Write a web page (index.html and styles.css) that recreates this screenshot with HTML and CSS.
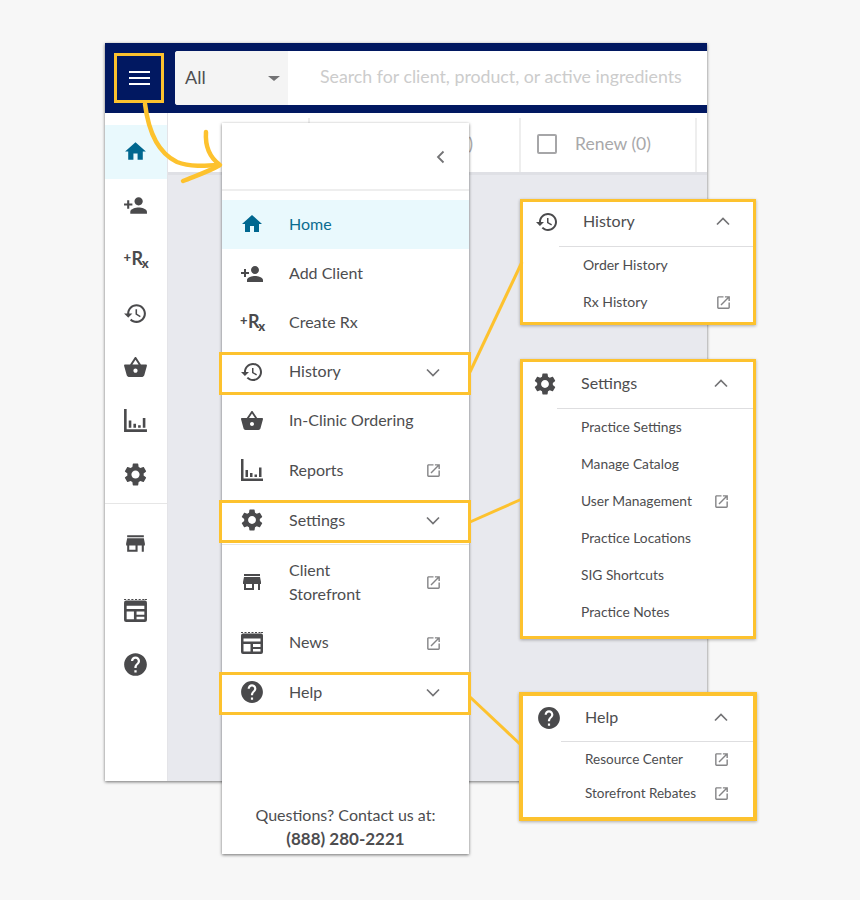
FILE: index.html
```html
<!DOCTYPE html>
<html lang="en">
<head>
<meta charset="utf-8">
<title>Navigation menu guide</title>
<link rel="stylesheet" href="styles.css">
</head>
<body>
<svg class="sprite" xmlns="http://www.w3.org/2000/svg">
  <symbol id="i-home" viewBox="0 0 24 24"><path d="M10 20v-6h4v6h5v-8h3L12 3 2 12h3v8z"/></symbol>
  <symbol id="i-add" viewBox="0 0 24 24"><path d="M15 12c2.21 0 4-1.79 4-4s-1.79-4-4-4-4 1.79-4 4 1.79 4 4 4zm-9-2V7H4v3H1v2h3v3h2v-3h3v-2H6zm9 4c-2.67 0-8 1.34-8 4v2h16v-2c0-2.66-5.33-4-8-4z"/></symbol>
  <symbol id="i-history" viewBox="0 0 24 24"><path d="M13 3c-4.97 0-9 4.03-9 9H1l3.89 3.89.07.14L9 12H6c0-3.87 3.13-7 7-7s7 3.13 7 7-3.13 7-7 7c-1.93 0-3.68-.79-4.94-2.06l-1.42 1.42C8.27 19.99 10.51 21 13 21c4.97 0 9-4.03 9-9s-4.03-9-9-9zm-1 5v5l4.28 2.54.72-1.21-3.5-2.08V8H12z"/></symbol>
  <symbol id="i-basket" viewBox="0 0 24 24"><path d="M17.21 9l-4.38-6.56c-.19-.28-.51-.42-.83-.42-.32 0-.64.14-.83.43L6.79 9H2c-.55 0-1 .45-1 1 0 .09.01.18.04.27l2.54 9.27c.23.84 1 1.46 1.92 1.46h13c.92 0 1.69-.62 1.93-1.46l2.54-9.27L23 10c0-.55-.45-1-1-1h-4.79zM9 9l3-4.4L15 9H9zm3 8c-1.1 0-2-.9-2-2s.9-2 2-2 2 .9 2 2-.9 2-2 2z"/></symbol>
  <symbol id="i-reports" viewBox="0 0 24 24"><path d="M1 1h2.500v19.500H23V23H1zM5.500 12h2.500v7H5.500zM10 15h2.500v4H10zM14.500 16.500H17V19h-2.500zM19 9.500h2.500V19H19z"/></symbol>
  <symbol id="i-settings" viewBox="1 1 22 22"><path d="M19.140 12.940c.04-.3.06-.61.06-.94 0-.32-.02-.64-.07-.94l2.030-1.580c.18-.14.23-.41.12-.61l-1.920-3.320c-.12-.22-.37-.29-.59-.22l-2.390.96c-.5-.38-1.030-.7-1.620-.94l-.36-2.540c-.04-.24-.24-.41-.48-.41h-3.840c-.24 0-.43.17-.47.41l-.36 2.540c-.59.24-1.130.57-1.620.94l-2.390-.96c-.22-.08-.47 0-.59.22L2.740 8.870c-.12.21-.08.47.12.61l2.030 1.580c-.05.3-.09.63-.09.94s.02.64.07.94l-2.030 1.580c-.18.14-.23.41-.12.61l1.920 3.320c.12.22.37.29.59.22l2.390-.96c.5.38 1.030.7 1.620.94l.36 2.540c.05.24.24.41.48.41h3.840c.24 0 .44-.17.47-.41l.36-2.540c.59-.24 1.130-.56 1.620-.94l2.390.96c.22.08.47 0 .59-.22l1.920-3.320c.12-.22.07-.47-.12-.61l-2.010-1.580zM12 15.600c-1.980 0-3.600-1.620-3.600-3.600s1.620-3.600 3.600-3.600 3.600 1.620 3.600 3.600-1.620 3.600-3.600 3.600z"/></symbol>
  <symbol id="i-store" viewBox="0 0 24 24"><path d="M20 4H4v2h16V4zm1 10v-2l-1-5H4l-1 5v2h1v6h10v-6h4v6h2v-6h1zm-9 4H6v-4h6v4z"/></symbol>
  <symbol id="i-news" viewBox="0 0 24 24"><path fill-rule="evenodd" d="M1 1h2v1H1zM4.500 1h2v1h-2zM8 1h2v1H8zM11.500 1h2v1h-2zM15 1h2v1h-2zM18.500 1h2v1h-2zM21 1h2v1h-2zM3 2.500h18a2 2 0 0 1 2 2V21a2 2 0 0 1-2 2H3a2 2 0 0 1-2-2V4.500a2 2 0 0 1 2-2zM3.500 7.500v3h17v-3zM3.500 13v7.500h7V13zM13 13v3h7.500v-3zM13 18v2.500h7.500V18z"/></symbol>
  <symbol id="i-help" viewBox="1 1 22 22"><path d="M12 2C6.480 2 2 6.480 2 12s4.480 10 10 10 10-4.480 10-10S17.520 2 12 2zm1 17h-2v-2h2v2zm2.070-7.750l-.9.920C13.450 12.900 13 13.500 13 15h-2v-.5c0-1.100.45-2.100 1.170-2.830l1.240-1.260c.37-.36.59-.86.59-1.410 0-1.100-.9-2-2-2s-2 .9-2 2H8c0-2.210 1.790-4 4-4s4 1.790 4 4c0 .88-.36 1.680-.93 2.250z"/></symbol>
  <symbol id="i-open" viewBox="0 0 24 24"><path d="M19 19H5V5h7V3H5c-1.110 0-2 .9-2 2v14c0 1.100.89 2 2 2h14c1.100 0 2-.9 2-2v-7h-2v7zM14 3v2h3.590l-9.830 9.830 1.410 1.410L19 6.410V10h2V3h-7z"/></symbol>
  <symbol id="i-down" viewBox="0 0 16 16"><path d="M2 5.500L8 11.500l6-6" fill="none" stroke="currentColor" stroke-width="1.700"/></symbol>
  <symbol id="i-up" viewBox="0 0 16 16"><path d="M2 10.500L8 4.500l6 6" fill="none" stroke="currentColor" stroke-width="1.700"/></symbol>
  <symbol id="i-back" viewBox="0 0 16 16"><path d="M10.500 2.500L5 8l5.500 5.500" fill="none" stroke="currentColor" stroke-width="1.800"/></symbol>
</svg>

<main class="canvas">
  <section class="window">
    <header class="topbar">
      <button class="menu-button" type="button" aria-label="Open menu">
        <span></span><span></span><span></span>
      </button>
      <div class="search">
        <div class="search-scope"><span>All</span><i class="caret"></i></div>
        <div class="search-input">Search for client, product, or active ingredients</div>
      </div>
    </header>
    <div class="window-body">
      <nav class="rail">
        <div class="rail-group rail-main">
          <a class="rail-item active"><svg class="icon"><use href="#i-home"/></svg></a>
          <a class="rail-item"><svg class="icon"><use href="#i-add"/></svg></a>
          <a class="rail-item"><span class="rx"><b>+</b>R<sub>x</sub></span></a>
          <a class="rail-item"><svg class="icon"><use href="#i-history"/></svg></a>
          <a class="rail-item"><svg class="icon"><use href="#i-basket"/></svg></a>
          <a class="rail-item"><svg class="icon"><use href="#i-reports"/></svg></a>
          <a class="rail-item"><svg class="icon"><use href="#i-settings"/></svg></a>
        </div>
        <div class="rail-group rail-extra">
          <a class="rail-item rail-store"><svg class="icon"><use href="#i-store"/></svg></a>
          <a class="rail-item"><svg class="icon"><use href="#i-news"/></svg></a>
          <a class="rail-item"><svg class="icon"><use href="#i-help"/></svg></a>
        </div>
      </nav>
      <div class="content">
        <div class="toolbar">
          <div class="tool-cell tool-first"></div>
          <div class="tool-cell tool-count"><span>(0)</span></div>
          <div class="tool-cell tool-renew"><i class="checkbox"></i><span>Renew (0)</span></div>
        </div>
      </div>
    </div>
  </section>

  <aside class="drawer">
    <div class="drawer-head"><svg class="chev back"><use href="#i-back"/></svg></div>
    <ul class="drawer-list">
      <li class="row row-up current"><svg class="icon"><use href="#i-home"/></svg><span class="label">Home</span></li>
      <li class="row row-up"><svg class="icon"><use href="#i-add"/></svg><span class="label">Add Client</span></li>
      <li class="row row-up"><span class="rx"><b>+</b>R<sub>x</sub></span><span class="label">Create Rx</span></li>
      <li class="row row-up marked"><svg class="icon"><use href="#i-history"/></svg><span class="label">History</span><svg class="chev"><use href="#i-down"/></svg></li>
      <li class="row row-up"><svg class="icon"><use href="#i-basket"/></svg><span class="label">In-Clinic Ordering</span></li>
      <li class="row"><svg class="icon"><use href="#i-reports"/></svg><span class="label">Reports</span><svg class="ext"><use href="#i-open"/></svg></li>
      <li class="row marked row-settings"><svg class="icon"><use href="#i-settings"/></svg><span class="label">Settings</span><svg class="chev"><use href="#i-down"/></svg></li>
      <li class="row row-tall"><svg class="icon"><use href="#i-store"/></svg><span class="label">Client<br>Storefront</span><svg class="ext"><use href="#i-open"/></svg></li>
      <li class="row row-up"><svg class="icon"><use href="#i-news"/></svg><span class="label">News</span><svg class="ext"><use href="#i-open"/></svg></li>
      <li class="row marked"><svg class="icon"><use href="#i-help"/></svg><span class="label">Help</span><svg class="chev"><use href="#i-down"/></svg></li>
    </ul>
    <footer class="drawer-foot">
      <p>Questions? Contact us at:</p>
      <p class="phone">(888) 280-2221</p>
    </footer>
  </aside>

  <section class="callout callout-history">
    <div class="callout-head"><svg class="icon"><use href="#i-history"/></svg><span class="label">History</span><svg class="chev"><use href="#i-up"/></svg></div>
    <ul class="callout-items">
      <li><span>Order History</span></li>
      <li><span>Rx History</span><svg class="ext"><use href="#i-open"/></svg></li>
    </ul>
  </section>

  <section class="callout callout-settings">
    <div class="callout-head"><svg class="icon"><use href="#i-settings"/></svg><span class="label">Settings</span><svg class="chev"><use href="#i-up"/></svg></div>
    <ul class="callout-items">
      <li><span>Practice Settings</span></li>
      <li><span>Manage Catalog</span></li>
      <li><span>User Management</span><svg class="ext"><use href="#i-open"/></svg></li>
      <li><span>Practice Locations</span></li>
      <li><span>SIG Shortcuts</span></li>
      <li><span>Practice Notes</span></li>
    </ul>
  </section>

  <section class="callout callout-help">
    <div class="callout-head"><svg class="icon"><use href="#i-help"/></svg><span class="label">Help</span><svg class="chev"><use href="#i-up"/></svg></div>
    <ul class="callout-items">
      <li><span>Resource Center</span><svg class="ext"><use href="#i-open"/></svg></li>
      <li><span>Storefront Rebates</span><svg class="ext"><use href="#i-open"/></svg></li>
    </ul>
  </section>

  <svg class="annotations" viewBox="0 0 860 900" xmlns="http://www.w3.org/2000/svg">
    <path d="M145 104C148 128 156 152 177 162C190 167 205 166 219 165"/>
    <path d="M206 132C205 146 209 157 220 165C208 172 195 176 183 181"/>
    <path class="thin" d="M470 372L522 262"/>
    <path class="thin" d="M470 522L522 499"/>
    <path class="thin" d="M470 697L521 745"/>
  </svg>
</main>
</body>
</html>
```

FILE: styles.css
```css
* { box-sizing: border-box; }

html, body { margin: 0; padding: 0; }

body {
  background: #f7f7f7;
  color: #4d4d4f;
  font-family: "Lato", "Open Sans", sans-serif;
  font-size: 16px;
}

ul { list-style: none; margin: 0; padding: 0; }
p { margin: 0; }

.sprite { display: none; }

.canvas {
  position: relative;
  width: 860px;
  height: 900px;
  overflow: hidden;
}

.icon {
  flex: none;
  width: 24px;
  height: 24px;
  fill: #4a4a4c;
}

.chev { flex: none; width: 16px; height: 16px; color: #737375; }
.ext { flex: none; width: 17px; height: 17px; fill: #858587; }

.rx {
  flex: none;
  display: block;
  width: 24px;
  height: 24px;
  margin-bottom: 3px;
  color: #4a4a4c;
  font-size: 18px;
  font-weight: 700;
  line-height: 24px;
  letter-spacing: -1.5px;
  white-space: nowrap;
}
.rx b { font-size: 13px; position: relative; top: -3px; margin-right: 2px; }
.rx sub { font-size: 13px; font-weight: 900; line-height: 0; vertical-align: -3px; }

/* Application window */
.window {
  position: absolute;
  left: 105px;
  top: 43px;
  width: 602px;
  height: 738px;
  display: flex;
  flex-direction: column;
  background: #e8e9ee;
  box-shadow: 0 1px 3px rgba(0, 0, 0, .55);
}

.topbar {
  flex: none;
  height: 70px;
  display: flex;
  align-items: center;
  gap: 11px;
  padding-left: 9px;
  background: #011861;
}

.menu-button {
  width: 50px;
  height: 50px;
  display: flex;
  flex-direction: column;
  align-items: center;
  justify-content: center;
  gap: 4px;
  padding: 0 0 1px;
  background: transparent;
  border: 3px solid #fdc22e;
}
.menu-button span { width: 21px; height: 2px; background: #fff; }

.search {
  flex: 1;
  height: 54px;
  display: flex;
  background: #fff;
  border-radius: 3px 0 0 3px;
}

.search-scope {
  width: 113px;
  display: flex;
  align-items: center;
  justify-content: space-between;
  padding: 0 8px 2px 10px;
  background: #f4f4f4;
  border-radius: 3px 0 0 3px;
  color: #4d4d4f;
  font-size: 18px;
}

.caret {
  width: 0;
  height: 0;
  margin-top: 2px;
  border-left: 6px solid transparent;
  border-right: 6px solid transparent;
  border-top: 5px solid #737375;
}

.search-input {
  flex: 1;
  padding-left: 32px;
  color: #ccc;
  font-size: 17.75px;
  line-height: 51px;
  white-space: nowrap;
}

.window-body { flex: 1; display: flex; min-height: 0; }

.rail {
  flex: none;
  width: 63px;
  padding-top: 12px;
  background: #fff;
  border-right: 1px solid #e4e4e8;
}

.rail .icon { width: 25px; height: 25px; }

.rail-group { display: flex; flex-direction: column; }
.rail-main { padding-bottom: 1px; border-bottom: 1px solid #e6e6e6; }
.rail-extra { padding-top: 13px; }

.rail-item {
  height: 53.8px;
  display: flex;
  align-items: center;
  justify-content: center;
  padding-right: 1px;
}
.rail-item.active { background: #e9f9fd; }
.rail-item.active .icon { fill: #00678f; }
.rail-item.rail-store { margin-bottom: 13px; }

.content { flex: 1; min-width: 0; }

.toolbar {
  height: 62px;
  display: flex;
  padding-top: 5px;
  background: #fff;
  border-bottom: 3px solid #dfe0e5;
}

.tool-cell { display: flex; align-items: center; padding-bottom: 3px; border-right: 2px solid #eeeeee; }
.tool-first { width: 142px; }
.tool-count {
  width: 211px;
  justify-content: flex-end;
  padding-right: 46px;
  color: #a8a8aa;
  font-size: 17px;
}
.tool-renew {
  width: 176px;
  padding-left: 16px;
  gap: 18px;
  color: #a8a8aa;
  font-size: 17.5px;
}

.checkbox {
  width: 20px;
  height: 20px;
  border: 2px solid #a6a6a8;
  border-radius: 2px;
}

/* Navigation drawer */
.drawer {
  position: absolute;
  left: 222px;
  top: 123px;
  width: 247px;
  height: 731px;
  display: flex;
  flex-direction: column;
  background: #fff;
  box-shadow: 0 1px 3px rgba(0, 0, 0, .55);
}

.drawer-head {
  flex: none;
  height: 68px;
  display: flex;
  align-items: center;
  justify-content: flex-end;
  padding: 0 20px 0 0;
  border-bottom: 2px solid #eeeeee;
}
.back { margin-top: 2px; }

.drawer-list { padding-top: 9px; }

.row {
  position: relative;
  height: 49px;
  display: flex;
  align-items: center;
  padding: 0 28px 0 18px;
}
.row .label { flex: 1; margin-left: 25px; line-height: 24px; }
.row .ext { margin: 2px -0.5px 0 0; }
.row-up .label { margin-bottom: 2px; }
.row.current .icon { margin-bottom: 2px; }

.row.current { background: #e9f9fd; color: #0b6c90; }
.row.current .icon { fill: #00678f; }

.row.marked::after {
  content: "";
  position: absolute;
  inset: 5px -2px 1px -3px;
  border: 3px solid #fdc22e;
}

.row-settings { margin-top: 1px; border-bottom: 1px solid #e6e6e6; height: 50px; }
.row-tall { height: 73px; }

.drawer-foot {
  margin-top: auto;
  padding-bottom: 3px;
  text-align: center;
  line-height: 24px;
}
.phone { font-size: 17px; font-weight: 700; }

/* Callouts */
.callout {
  position: absolute;
  left: 520px;
  width: 236px;
  background: #fff;
  border: 3px solid #fdc22e;
  box-shadow: 0 1px 3px rgba(0, 0, 0, .3);
}

.callout-history { top: 199px; height: 126px; }
.callout-settings { top: 359px; height: 280px; }
.callout-help { top: 692px; left: 519px; width: 238px; height: 129px; border-width: 4px; }

.callout-head {
  height: 46px;
  display: flex;
  align-items: center;
  padding-bottom: 2px;
}
.callout-head .label { flex: 1; margin: 0 0 3px 24px; }

.callout-items { border-top: 1px solid #dedee0; font-size: 13.8px; }
.callout-items li {
  display: flex;
  align-items: center;
  justify-content: space-between;
  height: 37px;
  padding-left: 24px;
}
.callout-items span { margin-bottom: 2px; }

.callout-head .chev { margin-right: 24px; }
.callout-items .ext { margin-right: 23.5px; }

.callout-history .callout-head { height: 44px; padding-bottom: 4px; padding-left: 12px; }
.callout-history .callout-head .chev { margin-right: 22px; }
.callout-history .callout-items { margin-left: 36px; font-size: 14px; }
.callout-history .callout-items .ext { margin-right: 21.500px; }

.callout-settings .callout-head { padding-left: 10px; }
.callout-settings .callout-items { margin-left: 34px; }

.callout-help .callout-head { height: 45px; padding-bottom: 2px; padding-left: 14px; }
.callout-help .callout-items { margin-left: 38px; font-size: 13.5px; }
.callout-help .callout-items li { height: 34px; }
.callout-help .callout-items span { margin-bottom: 0; }

/* Arrow and connector lines */
.annotations {
  position: absolute;
  inset: 0;
  width: 860px;
  height: 900px;
  pointer-events: none;
  fill: none;
  stroke: #fdc22e;
  stroke-width: 4.5;
  stroke-linecap: round;
  stroke-linejoin: round;
}
.annotations .thin { stroke-width: 3; stroke-linecap: butt; }
```
